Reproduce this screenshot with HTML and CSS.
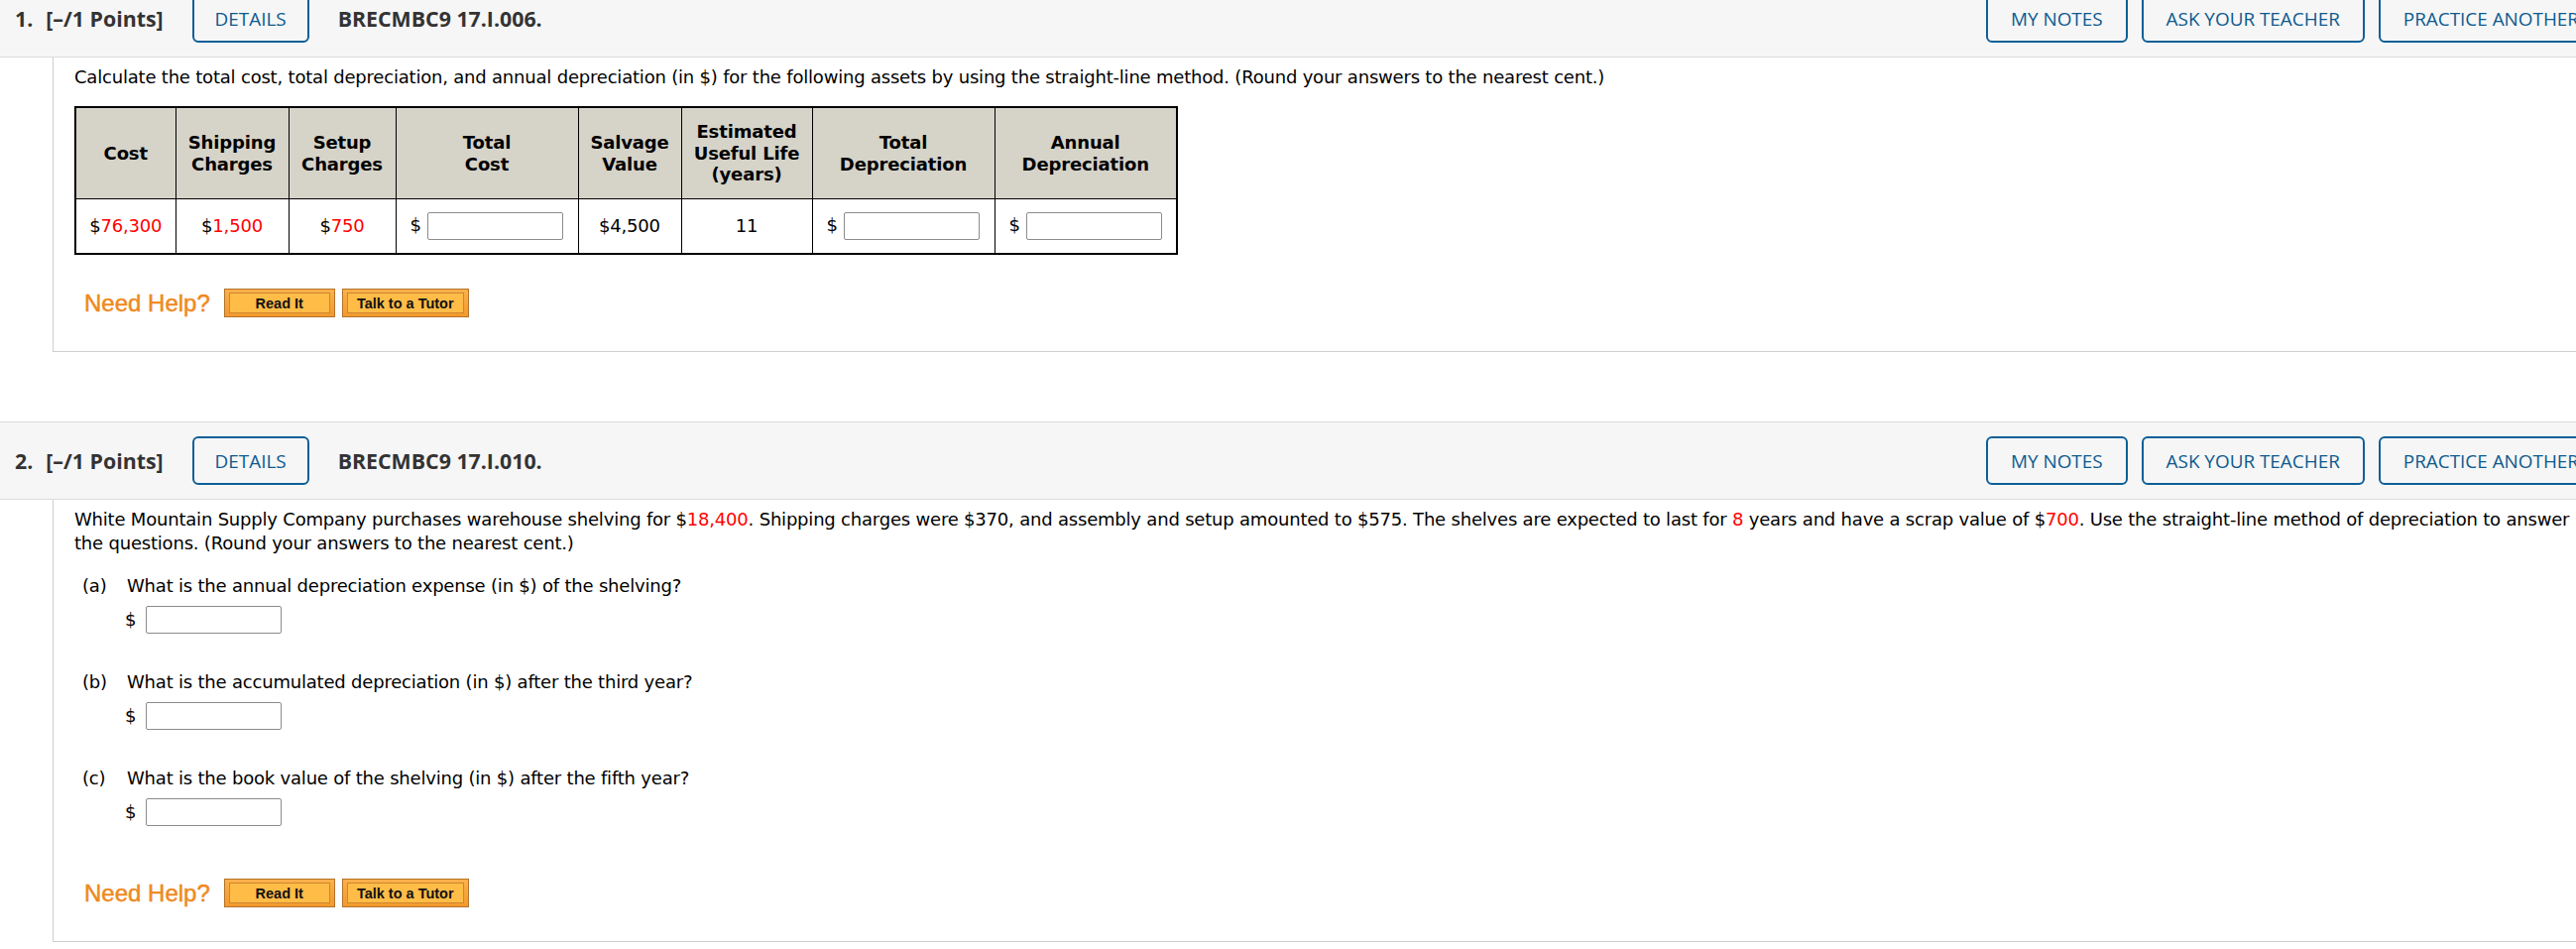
FILE: index.html
```html
<!DOCTYPE html>
<html lang="en">
<head>
<meta charset="utf-8">
<title>Questions</title>
<link rel="stylesheet" href="styles.css">
</head>
<body>
<div class="page">
  <section class="question">
    <header class="qhead">
      <span class="qnum">1.</span>
      <span class="qpts">[–/1 Points]</span>
      <button class="qbtn qdetails">DETAILS</button>
      <span class="qid">BRECMBC9 17.I.006.</span>
      <div class="qtools">
        <button class="qbtn">MY NOTES</button>
        <button class="qbtn">ASK YOUR TEACHER</button>
        <button class="qbtn">PRACTICE ANOTHER</button>
      </div>
    </header>
    <div class="qbody">
      <p class="stem">Calculate the total cost, total depreciation, and annual depreciation (in $) for the following assets by using the straight-line method. (Round your answers to the nearest cent.)</p>
      <table class="assets">
        <colgroup>
          <col class="c-cost"><col class="c-ship"><col class="c-setup"><col class="c-wide"><col class="c-salv"><col class="c-life"><col class="c-wide"><col class="c-wide">
        </colgroup>
        <thead>
          <tr>
            <th>Cost</th>
            <th>Shipping<br>Charges</th>
            <th>Setup<br>Charges</th>
            <th>Total<br>Cost</th>
            <th>Salvage<br>Value</th>
            <th>Estimated<br>Useful Life<br>(years)</th>
            <th>Total<br>Depreciation</th>
            <th>Annual<br>Depreciation</th>
          </tr>
        </thead>
        <tbody>
          <tr>
            <td>$<span class="red">76,300</span></td>
            <td>$<span class="red">1,500</span></td>
            <td>$<span class="red">750</span></td>
            <td class="in">$ <input class="ans" type="text"></td>
            <td>$4,500</td>
            <td>11</td>
            <td class="in">$ <input class="ans" type="text"></td>
            <td class="in">$ <input class="ans" type="text"></td>
          </tr>
        </tbody>
      </table>
      <div class="help">
        <span class="help-label">Need Help?</span>
        <span class="hbtn hbtn-read"><span>Read It</span></span>
        <span class="hbtn hbtn-tutor"><span>Talk to a Tutor</span></span>
      </div>
    </div>
  </section>

  <section class="question q2">
    <header class="qhead">
      <span class="qnum">2.</span>
      <span class="qpts">[–/1 Points]</span>
      <button class="qbtn qdetails">DETAILS</button>
      <span class="qid">BRECMBC9 17.I.010.</span>
      <div class="qtools">
        <button class="qbtn">MY NOTES</button>
        <button class="qbtn">ASK YOUR TEACHER</button>
        <button class="qbtn">PRACTICE ANOTHER</button>
      </div>
    </header>
    <div class="qbody">
      <p class="stem">White Mountain Supply Company purchases warehouse shelving for $<span class="red">18,400</span>. Shipping charges were $370, and assembly and setup amounted to $575. The shelves are expected to last for <span class="red">8</span> years and have a scrap value of $<span class="red">700</span>. Use the straight-line method of depreciation to answer the questions. (Round your answers to the nearest cent.)</p>
      <div class="part">
        <div class="part-q"><span class="part-label">(a)</span><span>What is the annual depreciation expense (in $) of the shelving?</span></div>
        <div class="part-a">$ <input class="ans" type="text"></div>
      </div>
      <div class="part">
        <div class="part-q"><span class="part-label">(b)</span><span>What is the accumulated depreciation (in $) after the third year?</span></div>
        <div class="part-a">$ <input class="ans" type="text"></div>
      </div>
      <div class="part">
        <div class="part-q"><span class="part-label">(c)</span><span>What is the book value of the shelving (in $) after the fifth year?</span></div>
        <div class="part-a">$ <input class="ans" type="text"></div>
      </div>
      <div class="help help2">
        <span class="help-label">Need Help?</span>
        <span class="hbtn hbtn-read"><span>Read It</span></span>
        <span class="hbtn hbtn-tutor"><span>Talk to a Tutor</span></span>
      </div>
    </div>
  </section>
</div>
</body>
</html>
```

FILE: styles.css
```css
html, body {
  margin: 0;
  padding: 0;
  overflow: hidden;
  background: #fff;
}

.page {
  width: 2642px;
  margin-top: -21px;
  font-family: "DejaVu Sans", Verdana, sans-serif;
  font-size: 18px;
  letter-spacing: -0.2px;
  color: #000;
}

.q2 {
  margin-top: 70px;
}

/* ---------- question header ---------- */
.qhead {
  display: flex;
  align-items: center;
  height: 77px;
  padding: 0 16px 0 15px;
  background: #f6f6f6;
  border-top: 1px solid #dcdcdc;
  border-bottom: 1px solid #dcdcdc;
  font-family: "Open Sans", "Liberation Sans", sans-serif;
  letter-spacing: 0;
  color: #333;
}

.qnum,
.qpts,
.qid {
  font-size: 21.33px;
  font-weight: 700;
}

.qnum {
  margin-right: 13px;
}

.qid {
  margin-left: 29px;
}

.qbtn {
  box-sizing: border-box;
  height: 49px;
  padding: 0 23px;
  background: #f6f6f6;
  border: 2px solid #0d5f97;
  border-radius: 6px;
  font-family: "Open Sans", "Liberation Sans", sans-serif;
  font-size: 18.9px;
  font-weight: 400;
  color: #0d5a8f;
  white-space: nowrap;
}

.qdetails {
  margin-left: 29px;
  padding: 0 21px;
}

.qtools {
  margin-left: auto;
  display: flex;
  gap: 14px;
}

/* ---------- question body ---------- */
.qbody {
  margin-left: 53px;
  padding: 8px 24px 34px 21px;
  border-left: 1px solid #cfcfcf;
  border-bottom: 1px solid #cfcfcf;
  line-height: 24px;
}

.stem {
  margin: 0;
}

.red {
  color: #ff0000;
}

/* ---------- table ---------- */
.assets {
  margin-top: 17px;
  border-collapse: collapse;
  table-layout: fixed;
  width: 1113px;
  border: 2px solid #000;
}

.c-cost { width: 101px; }
.c-ship { width: 114px; }
.c-setup { width: 108px; }
.c-wide { width: 184px; }
.c-salv { width: 104px; }
.c-life { width: 132px; }

.assets th,
.assets td {
  border: 1px solid #000;
  text-align: center;
  vertical-align: middle;
  padding: 0;
}

.assets th {
  height: 91px;
  background: #d6d3c9;
  font-weight: 700;
  font-size: 18px;
  line-height: 21.5px;
  letter-spacing: -0.15px;
}

.assets td {
  height: 54px;
}

.assets td.in {
  text-align: left;
  padding-left: 14px;
  white-space: nowrap;
}

.ans {
  box-sizing: border-box;
  width: 137px;
  height: 28px;
  margin: 0 0 0 1px;
  padding: 0 4px;
  border: 1px solid #8c8c8c;
  border-radius: 2px;
  background: #fff;
  vertical-align: middle;
  font: inherit;
}

/* ---------- sub parts ---------- */
.part {
  margin-top: 19px;
}

.part + .part {
  margin-top: 37px;
}

.part-q {
  display: flex;
  padding-left: 8px;
}

.part-label {
  width: 45px;
  flex: none;
}

.part-a {
  margin-top: 8px;
  padding-left: 51px;
  height: 28px;
  line-height: 28px;
  white-space: nowrap;
}

.part-a .ans {
  margin-left: 4px;
  vertical-align: top;
}

/* ---------- need help ---------- */
.help {
  display: flex;
  align-items: center;
  margin-top: 34px;
  padding-left: 10px;
  height: 29px;
  letter-spacing: 0;
}

.help2 {
  margin-top: 53px;
}

.help-label {
  font-family: "Liberation Sans", Arial, sans-serif;
  font-size: 24px;
  color: #ee8a1e;
  -webkit-text-stroke: 0.5px #ee8a1e;
  margin-right: 14px;
  line-height: 29px;
}

.hbtn {
  box-sizing: border-box;
  display: flex;
  height: 29px;
  padding: 3px 4px;
  border: 1px solid #b4732a;
  background: linear-gradient(#fbb04c, #f29a2e);
}

.hbtn > span {
  flex: 1;
  display: flex;
  align-items: center;
  justify-content: center;
  border: 1px solid #cf862e;
  background: #ffbd48;
  font-family: "Liberation Sans", Arial, sans-serif;
  font-weight: 700;
  font-size: 14.5px;
  color: #111;
}

.hbtn-read {
  width: 112px;
  margin-right: 7px;
}

.hbtn-tutor {
  width: 128px;
}
```
